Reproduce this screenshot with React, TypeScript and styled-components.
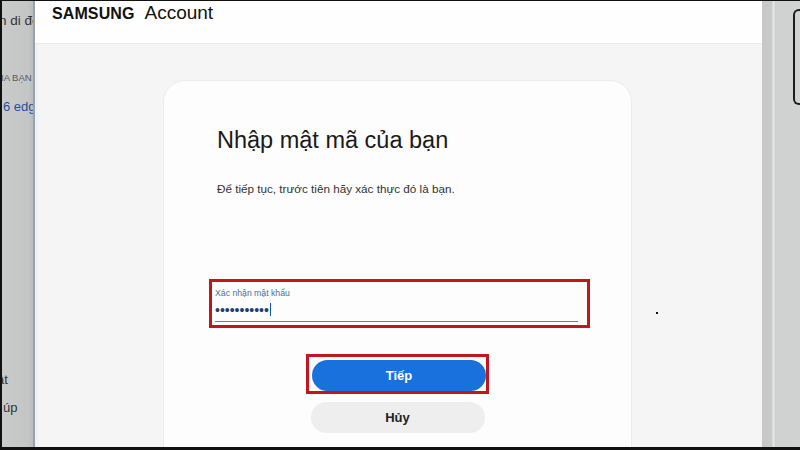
import React from "react"
import styled, { createGlobalStyle } from "styled-components"

const GlobalStyle = createGlobalStyle`
  html, body {
    margin: 0;
    padding: 0;
    background: #111;
  }
  body {
    font-family: "Liberation Sans", Arial, sans-serif;
  }
`

const App = () => {
  return (
    <>
      <GlobalStyle />
      <Screen>
        <Desk>
          <SidePanel>
            <SideLine size={13.5} top={12} shift={-3}>n di độ</SideLine>
            <SideLine size={9.5} top={44} shift={-1} upper>IA BẠN (</SideLine>
            <SideLine size={13} top={17} shift={1} link>6 edge</SideLine>
            <SideLine size={13} top={258} shift={-5}>ật</SideLine>
            <SideLine size={13} top={13} shift={1}>úp</SideLine>
          </SidePanel>

          <Window>
            <Header>
              <Brand>SAMSUNG</Brand>
              <BrandSub>Account</BrandSub>
            </Header>
            <Body>
              <Card>
                <Title>Nhập mật mã của bạn</Title>
                <Subtitle>Để tiếp tục, trước tiên hãy xác thực đó là bạn.</Subtitle>

                <FieldMark>
                  <Label>Xác nhận mật khẩu</Label>
                  <ValueRow>
                    <Dots>•••••••••••</Dots>
                    <Caret />
                  </ValueRow>
                </FieldMark>

                <ButtonMark>
                  <Button primary>Tiếp</Button>
                </ButtonMark>
                <Button>Hủy</Button>
              </Card>
              <Speck />
            </Body>
          </Window>

          <RightPanel>
            <Frame />
          </RightPanel>
        </Desk>
      </Screen>
    </>
  )
}

export default App

const Screen = styled.div`
  width: 800px;
  height: 450px;
  box-sizing: border-box;
  padding: 1px 0 3px 2px;
  background: #111;
  overflow: hidden;
`

const Desk = styled.div`
  display: flex;
  height: 100%;
`

const SidePanel = styled.div`
  width: 31px;
  flex-shrink: 0;
  display: flex;
  flex-direction: column;
  overflow: hidden;
  background: linear-gradient(90deg, #c9cbca 0%, #c4c6c5 85%, #b9bdbf 100%);
`

const SideLine = styled.div<{ size: number; top: number; shift: number; link?: boolean; upper?: boolean }>`
  margin-top: ${({ top }) => top}px;
  margin-left: ${({ shift }) => shift}px;
  font-size: ${({ size }) => size}px;
  line-height: 1.15;
  white-space: nowrap;
  color: ${({ link, upper }) => (link ? "#1d4f9e" : upper ? "#555a5e" : "#333")};
`

const Window = styled.div`
  flex: 1;
  display: flex;
  flex-direction: column;
  border-left: 2px solid #97a3ae;
  min-width: 0;
`

const Header = styled.div`
  height: 43px;
  flex-shrink: 0;
  box-sizing: border-box;
  padding: 2px 0 0 17px;
  display: flex;
  align-items: baseline;
  gap: 10px;
  background: #fefefe;
  border-bottom: 1px solid #e9eae9;
`

const Brand = styled.span`
  font-size: 16px;
  font-weight: 700;
  line-height: 20px;
  color: #111;
  letter-spacing: 0.1px;
`

const BrandSub = styled.span`
  font-size: 19px;
  line-height: 20px;
  color: #111;
`

const Body = styled.div`
  position: relative;
  flex: 1;
  overflow: hidden;
  display: flex;
  justify-content: center;
  padding: 36px 2px 0 0;
  background: #f4f5f4;
  box-shadow: inset 3px 0 0 #eef2f7;
`

const Card = styled.div`
  width: 469px;
  height: 420px;
  box-sizing: border-box;
  padding: 45px 53px 0;
  display: flex;
  flex-direction: column;
  background: #fdfdfd;
  border-radius: 22px;
  border: 1px solid #ececec;
`

const Title = styled.h1`
  margin: 0;
  font-size: 23.5px;
  line-height: 28px;
  font-weight: 400;
  color: #1a1a1a;
  white-space: nowrap;
`

const Subtitle = styled.p`
  margin: 27px 0 0;
  font-size: 11.7px;
  line-height: 16px;
  color: #333;
  white-space: nowrap;
`

const FieldMark = styled.div`
  margin: 82px -12px 0 -8px;
  padding: 6px 9px 3px 3px;
  border: 3px solid #c3151f;
  display: flex;
  flex-direction: column;
`

const Label = styled.div`
  font-size: 8.7px;
  line-height: 10px;
  color: #4f6f93;
  white-space: nowrap;
`

const ValueRow = styled.div`
  height: 23px;
  display: flex;
  align-items: center;
  border-bottom: 1.5px solid #4a86cc;
`

const Dots = styled.span`
  font-size: 14px;
  line-height: 14px;
  color: #1f3f70;
`

const Caret = styled.span`
  width: 1.5px;
  height: 13px;
  margin-left: 1px;
  background: #1b55ae;
`

const ButtonMark = styled.div`
  align-self: center;
  width: 183px;
  height: 40px;
  box-sizing: border-box;
  margin-top: 26px;
  padding: 3px 0 0 3px;
  border: 3px solid #c3151f;
  display: flex;
  justify-content: flex-end;
`

const Button = styled.button<{ primary?: boolean }>`
  align-self: ${({ primary }) => (primary ? "flex-start" : "center")};
  width: 174px;
  height: 31px;
  margin-top: ${({ primary }) => (primary ? 0 : 8)}px;
  border: none;
  border-radius: 16px;
  font-family: "Liberation Sans", Arial, sans-serif;
  font-size: 13px;
  font-weight: 700;
  color: ${({ primary }) => (primary ? "#fff" : "#222")};
  background: ${({ primary }) => (primary ? "#1871dc" : "#eeeeee")};
`

const Speck = styled.span`
  position: absolute;
  left: 621px;
  top: 268px;
  width: 2px;
  height: 2px;
  background: #111;
`

const RightPanel = styled.div`
  width: 38px;
  flex-shrink: 0;
  display: flex;
  align-items: flex-start;
  justify-content: flex-end;
  background: linear-gradient(
    90deg,
    #c5c8c7 0px,
    #c8cbca 10px,
    #e6e8e7 11px,
    #e6e8e7 12px,
    #cfd1d0 13px,
    #d1d3d2 100%
  );
`

const Frame = styled.div`
  width: 5px;
  height: 92px;
  margin-top: 8px;
  border: 2px solid #1c1c1c;
  border-right: none;
  border-radius: 6px 0 0 6px;
`
